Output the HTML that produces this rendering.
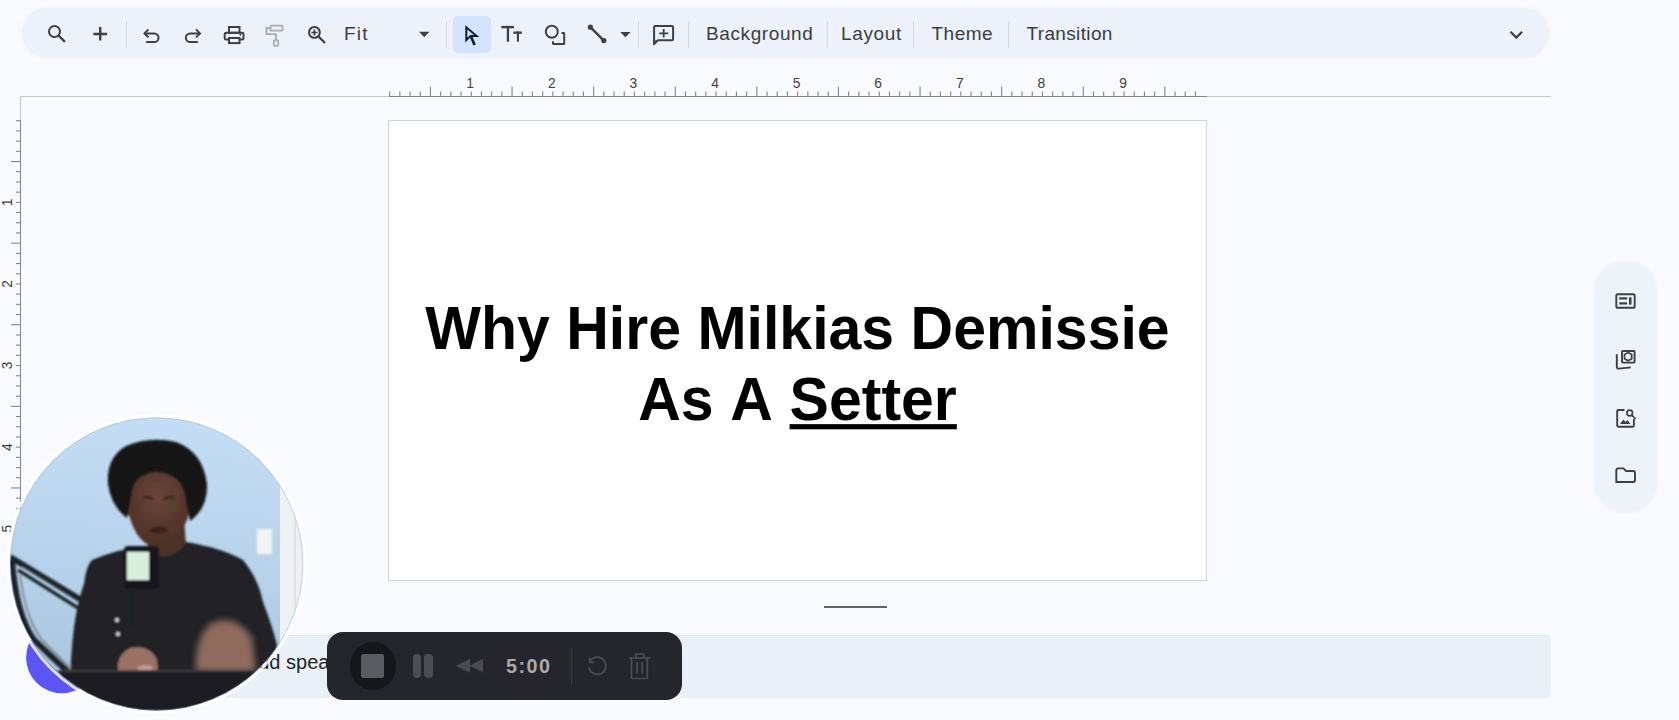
<!DOCTYPE html>
<html><head><meta charset="utf-8">
<style>
*{margin:0;padding:0;box-sizing:border-box}
html,body{width:1679px;height:720px;overflow:hidden;background:#f9fafd;font-family:"Liberation Sans",sans-serif;position:relative}
.a{position:absolute}
.tb{left:22px;top:8px;width:1527px;height:50px;border-radius:25px;background:#edf2fa;box-shadow:0 0 3px 1px rgba(237,242,250,0.7)}
.sep{position:absolute;top:21px;width:1px;height:27px;background:#d3d6db}
.tt{position:absolute;top:23px;font-size:19px;color:#3a3d41;line-height:22px;white-space:nowrap}
svg{overflow:visible}
.slide{left:388px;top:120px;width:819px;height:461px;background:#fff;border:1px solid #cfd1d4}
.title{position:absolute;left:0;width:817px;text-align:center;font-weight:bold;font-size:59px;color:#000;white-space:nowrap}
.notes{left:100px;top:635px;width:1451px;height:63px;border-radius:5px;background:#eaf0f8;border-top:1px solid #e2e7ee}
.side{left:1594px;top:261px;width:63px;height:252px;border-radius:29px;background:#eef2f9;filter:blur(1.2px)}
</style></head><body>

<div class="a tb"></div>
<svg style="position:absolute;left:0;top:0" width="1679" height="110"><rect x="20" y="96" width="1531" height="1" fill="#c4c7c5"/><rect x="389" y="96" width="818" height="1" fill="#80868b"/><rect x="389.10" y="91.5" width="1.1" height="5" fill="#80868b"/><rect x="399.30" y="91.5" width="1.1" height="5" fill="#80868b"/><rect x="409.50" y="91.5" width="1.1" height="5" fill="#80868b"/><rect x="419.70" y="91.5" width="1.1" height="5" fill="#80868b"/><rect x="429.90" y="86.5" width="1.1" height="10" fill="#80868b"/><rect x="440.10" y="91.5" width="1.1" height="5" fill="#80868b"/><rect x="450.30" y="91.5" width="1.1" height="5" fill="#80868b"/><rect x="460.50" y="91.5" width="1.1" height="5" fill="#80868b"/><rect x="470.70" y="91.5" width="1.1" height="5" fill="#80868b"/><rect x="480.90" y="91.5" width="1.1" height="5" fill="#80868b"/><rect x="491.10" y="91.5" width="1.1" height="5" fill="#80868b"/><rect x="501.30" y="91.5" width="1.1" height="5" fill="#80868b"/><rect x="511.50" y="86.5" width="1.1" height="10" fill="#80868b"/><rect x="521.70" y="91.5" width="1.1" height="5" fill="#80868b"/><rect x="531.90" y="91.5" width="1.1" height="5" fill="#80868b"/><rect x="542.10" y="91.5" width="1.1" height="5" fill="#80868b"/><rect x="552.30" y="91.5" width="1.1" height="5" fill="#80868b"/><rect x="562.50" y="91.5" width="1.1" height="5" fill="#80868b"/><rect x="572.70" y="91.5" width="1.1" height="5" fill="#80868b"/><rect x="582.90" y="91.5" width="1.1" height="5" fill="#80868b"/><rect x="593.10" y="86.5" width="1.1" height="10" fill="#80868b"/><rect x="603.30" y="91.5" width="1.1" height="5" fill="#80868b"/><rect x="613.50" y="91.5" width="1.1" height="5" fill="#80868b"/><rect x="623.70" y="91.5" width="1.1" height="5" fill="#80868b"/><rect x="633.90" y="91.5" width="1.1" height="5" fill="#80868b"/><rect x="644.10" y="91.5" width="1.1" height="5" fill="#80868b"/><rect x="654.30" y="91.5" width="1.1" height="5" fill="#80868b"/><rect x="664.50" y="91.5" width="1.1" height="5" fill="#80868b"/><rect x="674.70" y="86.5" width="1.1" height="10" fill="#80868b"/><rect x="684.90" y="91.5" width="1.1" height="5" fill="#80868b"/><rect x="695.10" y="91.5" width="1.1" height="5" fill="#80868b"/><rect x="705.30" y="91.5" width="1.1" height="5" fill="#80868b"/><rect x="715.50" y="91.5" width="1.1" height="5" fill="#80868b"/><rect x="725.70" y="91.5" width="1.1" height="5" fill="#80868b"/><rect x="735.90" y="91.5" width="1.1" height="5" fill="#80868b"/><rect x="746.10" y="91.5" width="1.1" height="5" fill="#80868b"/><rect x="756.30" y="86.5" width="1.1" height="10" fill="#80868b"/><rect x="766.50" y="91.5" width="1.1" height="5" fill="#80868b"/><rect x="776.70" y="91.5" width="1.1" height="5" fill="#80868b"/><rect x="786.90" y="91.5" width="1.1" height="5" fill="#80868b"/><rect x="797.10" y="91.5" width="1.1" height="5" fill="#80868b"/><rect x="807.30" y="91.5" width="1.1" height="5" fill="#80868b"/><rect x="817.50" y="91.5" width="1.1" height="5" fill="#80868b"/><rect x="827.70" y="91.5" width="1.1" height="5" fill="#80868b"/><rect x="837.90" y="86.5" width="1.1" height="10" fill="#80868b"/><rect x="848.10" y="91.5" width="1.1" height="5" fill="#80868b"/><rect x="858.30" y="91.5" width="1.1" height="5" fill="#80868b"/><rect x="868.50" y="91.5" width="1.1" height="5" fill="#80868b"/><rect x="878.70" y="91.5" width="1.1" height="5" fill="#80868b"/><rect x="888.90" y="91.5" width="1.1" height="5" fill="#80868b"/><rect x="899.10" y="91.5" width="1.1" height="5" fill="#80868b"/><rect x="909.30" y="91.5" width="1.1" height="5" fill="#80868b"/><rect x="919.50" y="86.5" width="1.1" height="10" fill="#80868b"/><rect x="929.70" y="91.5" width="1.1" height="5" fill="#80868b"/><rect x="939.90" y="91.5" width="1.1" height="5" fill="#80868b"/><rect x="950.10" y="91.5" width="1.1" height="5" fill="#80868b"/><rect x="960.30" y="91.5" width="1.1" height="5" fill="#80868b"/><rect x="970.50" y="91.5" width="1.1" height="5" fill="#80868b"/><rect x="980.70" y="91.5" width="1.1" height="5" fill="#80868b"/><rect x="990.90" y="91.5" width="1.1" height="5" fill="#80868b"/><rect x="1001.10" y="86.5" width="1.1" height="10" fill="#80868b"/><rect x="1011.30" y="91.5" width="1.1" height="5" fill="#80868b"/><rect x="1021.50" y="91.5" width="1.1" height="5" fill="#80868b"/><rect x="1031.70" y="91.5" width="1.1" height="5" fill="#80868b"/><rect x="1041.90" y="91.5" width="1.1" height="5" fill="#80868b"/><rect x="1052.10" y="91.5" width="1.1" height="5" fill="#80868b"/><rect x="1062.30" y="91.5" width="1.1" height="5" fill="#80868b"/><rect x="1072.50" y="91.5" width="1.1" height="5" fill="#80868b"/><rect x="1082.70" y="86.5" width="1.1" height="10" fill="#80868b"/><rect x="1092.90" y="91.5" width="1.1" height="5" fill="#80868b"/><rect x="1103.10" y="91.5" width="1.1" height="5" fill="#80868b"/><rect x="1113.30" y="91.5" width="1.1" height="5" fill="#80868b"/><rect x="1123.50" y="91.5" width="1.1" height="5" fill="#80868b"/><rect x="1133.70" y="91.5" width="1.1" height="5" fill="#80868b"/><rect x="1143.90" y="91.5" width="1.1" height="5" fill="#80868b"/><rect x="1154.10" y="91.5" width="1.1" height="5" fill="#80868b"/><rect x="1164.30" y="86.5" width="1.1" height="10" fill="#80868b"/><rect x="1174.50" y="91.5" width="1.1" height="5" fill="#80868b"/><rect x="1184.70" y="91.5" width="1.1" height="5" fill="#80868b"/><rect x="1194.90" y="91.5" width="1.1" height="5" fill="#80868b"/><text x="470.2" y="87.8" font-size="13.8" text-anchor="middle" fill="#3c4043" font-family="Liberation Sans">1</text><text x="551.8" y="87.8" font-size="13.8" text-anchor="middle" fill="#3c4043" font-family="Liberation Sans">2</text><text x="633.4" y="87.8" font-size="13.8" text-anchor="middle" fill="#3c4043" font-family="Liberation Sans">3</text><text x="715.0" y="87.8" font-size="13.8" text-anchor="middle" fill="#3c4043" font-family="Liberation Sans">4</text><text x="796.6" y="87.8" font-size="13.8" text-anchor="middle" fill="#3c4043" font-family="Liberation Sans">5</text><text x="878.2" y="87.8" font-size="13.8" text-anchor="middle" fill="#3c4043" font-family="Liberation Sans">6</text><text x="959.8" y="87.8" font-size="13.8" text-anchor="middle" fill="#3c4043" font-family="Liberation Sans">7</text><text x="1041.4" y="87.8" font-size="13.8" text-anchor="middle" fill="#3c4043" font-family="Liberation Sans">8</text><text x="1123.0" y="87.8" font-size="13.8" text-anchor="middle" fill="#3c4043" font-family="Liberation Sans">9</text></svg>
<svg style="position:absolute;left:0;top:0" width="40" height="720"><rect x="20" y="96" width="1" height="504" fill="#c4c7c5"/><rect x="20" y="121" width="1" height="460" fill="#80868b"/><rect x="16" y="120.20" width="5" height="1.1" fill="#80868b"/><rect x="16" y="130.40" width="5" height="1.1" fill="#80868b"/><rect x="16" y="140.60" width="5" height="1.1" fill="#80868b"/><rect x="16" y="150.80" width="5" height="1.1" fill="#80868b"/><rect x="11" y="161.00" width="10" height="1.1" fill="#80868b"/><rect x="16" y="171.20" width="5" height="1.1" fill="#80868b"/><rect x="16" y="181.40" width="5" height="1.1" fill="#80868b"/><rect x="16" y="191.60" width="5" height="1.1" fill="#80868b"/><rect x="16" y="201.80" width="5" height="1.1" fill="#80868b"/><rect x="16" y="212.00" width="5" height="1.1" fill="#80868b"/><rect x="16" y="222.20" width="5" height="1.1" fill="#80868b"/><rect x="16" y="232.40" width="5" height="1.1" fill="#80868b"/><rect x="11" y="242.60" width="10" height="1.1" fill="#80868b"/><rect x="16" y="252.80" width="5" height="1.1" fill="#80868b"/><rect x="16" y="263.00" width="5" height="1.1" fill="#80868b"/><rect x="16" y="273.20" width="5" height="1.1" fill="#80868b"/><rect x="16" y="283.40" width="5" height="1.1" fill="#80868b"/><rect x="16" y="293.60" width="5" height="1.1" fill="#80868b"/><rect x="16" y="303.80" width="5" height="1.1" fill="#80868b"/><rect x="16" y="314.00" width="5" height="1.1" fill="#80868b"/><rect x="11" y="324.20" width="10" height="1.1" fill="#80868b"/><rect x="16" y="334.40" width="5" height="1.1" fill="#80868b"/><rect x="16" y="344.60" width="5" height="1.1" fill="#80868b"/><rect x="16" y="354.80" width="5" height="1.1" fill="#80868b"/><rect x="16" y="365.00" width="5" height="1.1" fill="#80868b"/><rect x="16" y="375.20" width="5" height="1.1" fill="#80868b"/><rect x="16" y="385.40" width="5" height="1.1" fill="#80868b"/><rect x="16" y="395.60" width="5" height="1.1" fill="#80868b"/><rect x="11" y="405.80" width="10" height="1.1" fill="#80868b"/><rect x="16" y="416.00" width="5" height="1.1" fill="#80868b"/><rect x="16" y="426.20" width="5" height="1.1" fill="#80868b"/><rect x="16" y="436.40" width="5" height="1.1" fill="#80868b"/><rect x="16" y="446.60" width="5" height="1.1" fill="#80868b"/><rect x="16" y="456.80" width="5" height="1.1" fill="#80868b"/><rect x="16" y="467.00" width="5" height="1.1" fill="#80868b"/><rect x="16" y="477.20" width="5" height="1.1" fill="#80868b"/><rect x="11" y="487.40" width="10" height="1.1" fill="#80868b"/><rect x="16" y="497.60" width="5" height="1.1" fill="#80868b"/><rect x="16" y="507.80" width="5" height="1.1" fill="#80868b"/><rect x="16" y="518.00" width="5" height="1.1" fill="#80868b"/><rect x="16" y="528.20" width="5" height="1.1" fill="#80868b"/><rect x="16" y="538.40" width="5" height="1.1" fill="#80868b"/><rect x="16" y="548.60" width="5" height="1.1" fill="#80868b"/><rect x="16" y="558.80" width="5" height="1.1" fill="#80868b"/><rect x="11" y="569.00" width="10" height="1.1" fill="#80868b"/><rect x="16" y="579.20" width="5" height="1.1" fill="#80868b"/><text x="0" y="0" transform="translate(12 202.3) rotate(-90)" font-size="13.8" text-anchor="middle" fill="#3c4043" font-family="Liberation Sans">1</text><text x="0" y="0" transform="translate(12 283.9) rotate(-90)" font-size="13.8" text-anchor="middle" fill="#3c4043" font-family="Liberation Sans">2</text><text x="0" y="0" transform="translate(12 365.5) rotate(-90)" font-size="13.8" text-anchor="middle" fill="#3c4043" font-family="Liberation Sans">3</text><text x="0" y="0" transform="translate(12 447.1) rotate(-90)" font-size="13.8" text-anchor="middle" fill="#3c4043" font-family="Liberation Sans">4</text><text x="0" y="0" transform="translate(12 528.7) rotate(-90)" font-size="13.8" text-anchor="middle" fill="#3c4043" font-family="Liberation Sans">5</text></svg>
<div class="a slide"><div class="title" style="top:172px;line-height:72px;transform:scaleY(1.035);transform-origin:50% 56.5px">Why Hire Milkias Demissie</div><div class="title" style="top:243px;line-height:72px;transform:scaleY(1.035);transform-origin:50% 56.5px;word-spacing:2.5px">As A <span style="text-decoration:underline;text-decoration-thickness:5px;text-underline-offset:4px">Setter</span></div></div>
<div class="a notes"></div>
<div class="a" style="left:824px;top:606px;width:63px;height:2px;background:#5f6368"></div>
<div class="a side"></div>
<div class="tt" style="left:344px;letter-spacing:1.2px">Fit</div>
<div class="tt" style="left:706px;letter-spacing:0.6px">Background</div>
<div class="tt" style="left:841px;letter-spacing:0.65px">Layout</div>
<div class="tt" style="left:931.5px;letter-spacing:0.5px">Theme</div>
<div class="tt" style="left:1026.5px;letter-spacing:0.35px">Transition</div>
<div class="sep" style="left:126px"></div>
<div class="sep" style="left:446px"></div>
<div class="sep" style="left:638px"></div>
<div class="sep" style="left:688px"></div>
<div class="sep" style="left:827px"></div>
<div class="sep" style="left:913px"></div>
<div class="sep" style="left:1008px"></div>
<div class="a" style="left:453px;top:16px;width:38px;height:37px;border-radius:5px;background:#d3e3fd"></div>
<svg class="a" style="left:0;top:0" width="1679" height="720" viewBox="0 0 1679 720">
<g fill="none" stroke="#3c4043" stroke-width="2" stroke-linecap="butt">
 <circle cx="54.5" cy="31.5" r="5.5"/>
 <path d="M58.6 35.6 L64.9 41.9" stroke-width="2.2"/>
 <path d="M93.4 34 H107 M100.2 27 V40.6" stroke-width="2.4"/>
 <path d="M148.4 29.4 L144.5 33.4 L148.4 37.4" stroke-width="2"/>
 <path d="M145 33.4 H154.2 A4.35 4.35 0 0 1 154.2 42.1 H146.2"/>
 <path d="M196 29.4 L200 33.4 L196 37.4"/>
 <path d="M199.5 33.4 H190.2 A4.35 4.35 0 0 0 190.2 42.1 H197.8"/>
 <rect x="224.7" y="32.8" width="18.8" height="6.6" rx="1.5"/>
 <rect x="229" y="27" width="10.5" height="5.8"/>
 <rect x="229" y="38" width="10.5" height="5.1" fill="#edf2fa"/>
 <circle cx="314.4" cy="32.4" r="5.4"/>
 <path d="M318.4 36.4 L325 43" stroke-width="2.2"/>
 <path d="M311.4 32.5 H317.4 M314.4 29.6 V35.4" stroke-width="1.7"/>
 <circle cx="551.8" cy="31.8" r="6"/>
 <path d="M561.5 33 H563.8 Q564.2 33 564.2 33.5 V43.6 Q564.2 44.1 563.7 44.1 H553.5 Q553 44.1 553 43.6 V41.2"/>
 <path d="M590.4 27.2 L603.8 40.6" stroke-width="2.4"/>
 <path d="M654.1 44 V27 Q654.1 25.9 655.2 25.9 H672 Q673.1 25.9 673.1 27 V39.2 Q673.1 40.3 672 40.3 H657.8 L654.1 44 Z" stroke-width="2" stroke-linejoin="round"/>
 <path d="M659.2 33.3 H668.2 M663.7 28.9 V37.6" stroke-width="1.8"/>
 <path d="M1510.5 31.8 L1516.3 37.6 L1522.1 31.8" stroke-width="2.2"/>
</g>
<g fill="#3c4043">
 <circle cx="590.4" cy="27.2" r="2.6"/><circle cx="603.8" cy="40.6" r="2.6"/>
 <circle cx="240.4" cy="34.8" r="1"/>
 <path d="M419 31.8 H429.5 L424.25 37.3 Z"/>
 <path d="M620.2 32 H630.6 L625.4 37.3 Z"/>
 <rect x="501.4" y="25.9" width="12.6" height="2.4"/>
 <rect x="506.8" y="25.9" width="2.3" height="15.8"/>
 <rect x="513.3" y="31.5" width="8.7" height="2.3"/>
 <rect x="516.9" y="31.5" width="2.1" height="10.2"/>
 <path d="M653.1 45.4 L653.1 40.5 L657.5 40.5 Z"/>
</g>
<g fill="none" stroke="#a9acb0" stroke-width="1.9">
 <rect x="270.5" y="25.6" width="12" height="5" rx="0.6"/>
 <path d="M270.5 28 H266.5 V34.1 H276 V40"/>
 <rect x="273.9" y="40.2" width="4.3" height="5.7" rx="0.8"/>
</g>
<path d="M466.3 27.3 V40.2 L470.6 35.9 H476.6 Z" fill="none" stroke="#0b1a33" stroke-width="2" stroke-linejoin="miter"/><path d="M471.2 37 L474.6 44.9" stroke="#0b1a33" stroke-width="2.6"/>
</svg>
<svg class="a" style="left:0;top:0" width="1679" height="720" viewBox="0 0 1679 720">
<g fill="none" stroke="#3c4043" stroke-width="1.9">
 <rect x="1616.3" y="294.2" width="18.4" height="13.6" rx="1.6"/>
 <rect x="1622" y="351" width="12.6" height="11.6" rx="0.8"/>
 <path d="M1616.8 354.3 V366.8 Q1616.8 368.8 1618.8 368.6 L1630.8 367.4"/>
 <path d="M1628.1 352.6 L1631.7 354.6 L1631.7 358.8 L1628.1 360.8 L1624.5 358.8 L1624.5 354.6 Z" stroke-width="1.7"/>
 <path d="M1624.5 410 H1618.3 Q1617.2 410 1617.2 411.1 V425.6 Q1617.2 426.7 1618.3 426.7 H1632.8 Q1633.9 426.7 1633.9 425.6 V419"/>
 <circle cx="1629.7" cy="413" r="2.8" stroke-width="1.7"/>
 <path d="M1631.8 415.2 L1635.6 419" stroke-width="1.7"/>
 <path d="M1616.3 482 V470.4 Q1616.3 468.4 1618.3 468.4 H1623.5 L1626 471 H1633 Q1635 471 1635 473 V480 Q1635 482 1633 482 Z"/>
</g>
<g fill="#3c4043">
 <rect x="1619.2" y="297.3" width="8" height="2.2"/>
 <rect x="1619.2" y="302.3" width="8" height="2.2"/>
 <rect x="1629" y="297.3" width="2.5" height="7.4"/>
 <path d="M1620 424 L1623.5 419.5 L1625.5 422 L1627.3 420 L1630.5 424 Z"/>
</g>
</svg>
<div class="a" style="left:176px;top:651px;font-size:20px;color:#1f1f1f;line-height:22px;white-space:nowrap">Click to add speaker notes</div>

<svg class="a" style="left:0;top:0" width="1679" height="720">
 <defs>
  <clipPath id="cc"><circle cx="156.5" cy="564" r="146.5"/></clipPath>
  <linearGradient id="wall" x1="0.2" y1="0" x2="0.1" y2="1">
   <stop offset="0" stop-color="#c3ddf4"/><stop offset="0.6" stop-color="#b3cfe8"/><stop offset="1" stop-color="#a4bfd6"/>
  </linearGradient>
  <radialGradient id="face" cx="0.5" cy="0.35" r="0.6">
   <stop offset="0" stop-color="#6a4538"/><stop offset="1" stop-color="#4e3228"/>
  </radialGradient>
  <filter id="bl" x="-10%" y="-10%" width="120%" height="120%"><feGaussianBlur stdDeviation="1.3"/></filter>
  <filter id="bl3" x="-30%" y="-30%" width="160%" height="160%"><feGaussianBlur stdDeviation="3"/></filter>
  <radialGradient id="sh" cx="0.5" cy="0.5" r="0.5">
   <stop offset="0.93" stop-color="#000" stop-opacity="0.10"/><stop offset="1" stop-color="#000" stop-opacity="0"/>
  </radialGradient>
 </defs>
 <circle cx="61.8" cy="657.5" r="35.7" fill="#5b55f1"/>
 <circle cx="156.5" cy="564" r="148.5" fill="none" stroke="#ffffff" stroke-width="3" opacity="0.8"/>
 <g clip-path="url(#cc)">
  <rect x="0" y="410" width="320" height="310" fill="url(#wall)"/>
  <rect x="280" y="410" width="40" height="310" fill="#eef1f4"/>
  <rect x="294.5" y="410" width="1.2" height="310" fill="#d6dae0"/>
  <g filter="url(#bl)">
   <rect x="257" y="529" width="15" height="25" fill="#f2f3f3"/>
   <!-- mic arm -->
   <path d="M10 557 L86 603" stroke="#1f2327" stroke-width="6"/>
   <path d="M18 570 L86 613" stroke="#23272c" stroke-width="3.5"/>
   <path d="M22 567 L84 606" stroke="#8fa3b3" stroke-width="1"/>
   <path d="M12 560 Q16 615 34 640 L68 672" stroke="#1f2327" stroke-width="6" fill="none"/>
   <path d="M20 575 Q26 620 42 640 L70 668" stroke="#5d6670" stroke-width="1.2" fill="none"/>
   <path d="M100 606 L122 630" stroke="#1c1d21" stroke-width="5"/>
   <!-- shirt -->
   <path d="M70 720 L71 660 Q74 610 84 584 Q86 566 92 560 Q120 548 150 546 L186 542 Q222 548 243 560 Q258 578 263 602 Q272 625 277 645 L275 720 Z" fill="#212226"/>
   <!-- neck -->
   <path d="M143 520 L184 520 L186 544 Q172 560 156 556 L148 548 Z" fill="#4b3026"/>
   <!-- face -->
   <path d="M156 470 Q184 472 188 500 Q191 514 185 524 Q176 544 158 547 Q144 546 137 534 Q128 520 128 502 Q128 474 156 470 Z" fill="url(#face)"/>
   <ellipse cx="131" cy="510" rx="4" ry="7" fill="#553529"/>
   <ellipse cx="186" cy="508" rx="4" ry="7" fill="#553529"/>
   <path d="M143 498 Q149 496 153 499 M163 499 Q168 496 174 498" stroke="#2a1a15" stroke-width="2" fill="none"/>
   <ellipse cx="159" cy="530" rx="9" ry="3.5" fill="#3b241d"/>
   <!-- afro -->
   <path d="M127 518 Q111 506 108 484 Q106 458 126 446 Q150 436 176 442 Q203 452 207 484 Q208 508 190 521 L185 496 Q182 474 156 472 Q132 474 131 498 Z" fill="#141213"/>
   <!-- mic -->
   <rect x="124" y="546" width="35" height="43" rx="4" fill="#17181b"/>
   <rect x="127" y="552" width="22" height="28" fill="#d8efdd"/>
   <rect x="128" y="588" width="6" height="38" fill="#1f2023"/>
   <circle cx="117" cy="620" r="2" fill="#ddd"/><circle cx="118" cy="634" r="2" fill="#ddd"/>
   <!-- hands -->
   <path d="M118 672 Q116 655 130 648 Q150 644 157 660 L158 672 Z" fill="#9a7163"/><ellipse cx="145" cy="668" rx="8" ry="3" fill="#c09a90"/>
   <path d="M196 672 Q194 640 210 624 Q235 612 252 638 L256 672 Z" fill="#8f6a5d" filter="url(#bl3)"/>
   <!-- desk -->
   <rect x="0" y="671" width="320" height="60" fill="#1e1f23"/>
   <rect x="60" y="670" width="240" height="2" fill="#3a3b40"/>
  </g>
 </g>
 <circle cx="156.5" cy="564" r="146.2" fill="none" stroke="#9fb4c6" stroke-width="0.8" opacity="0.6"/>
</svg>


<div class="a" style="left:327px;top:632px;width:355px;height:68px;border-radius:16px;background:#25262b"></div>
<div class="a" style="left:349.5px;top:641.5px;width:46px;height:48px;border-radius:23px;background:#16171b"></div>
<div class="a" style="left:361px;top:654px;width:23px;height:23.5px;border-radius:2px;background:#5a5c62"></div>
<div class="a" style="left:412.5px;top:654px;width:8.5px;height:23.5px;border-radius:4px;background:#4d4e54"></div>
<div class="a" style="left:424px;top:654px;width:8.5px;height:23.5px;border-radius:4px;background:#4d4e54"></div>
<div class="a" style="left:570.5px;top:648px;width:1px;height:36px;background:#3d3e43"></div>
<div class="a" style="left:506px;top:654.5px;font-size:19.8px;font-weight:bold;color:#a9aaae;line-height:22px;letter-spacing:1.5px">5:00</div>
<svg class="a" style="left:0;top:0" width="1679" height="720">
 <path d="M455.8 665.8 L470 658.8 V672.7 Z M469.5 665.8 L483 658.8 V672.7 Z" fill="#4a4b50"/>
 <g fill="none" stroke="#4d4e53" stroke-width="1.7">
  <path d="M590.5 660.5 A8.6 8.6 0 1 1 588.8 667"/>
  <path d="M589.6 657.5 V662.3 H594.4"/>
  <path d="M629 658 H650.5"/>
  <path d="M635.8 657.8 V654 H643.6 V657.8"/>
  <path d="M631.5 658 V677.6 Q631.5 678.5 632.4 678.5 H646.4 Q647.3 678.5 647.3 677.6 V658"/>
  <path d="M637 662 V673.5 M642.2 662 V673.5"/>
 </g>
</svg>

</body></html>
